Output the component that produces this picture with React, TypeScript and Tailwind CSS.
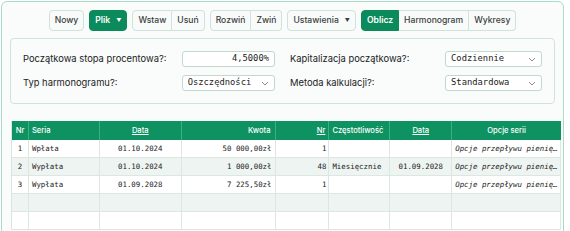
import React from "react";

const sans = { fontFamily: "Inter, 'Noto Sans', sans-serif" };

function Btn({ children, green, first, last, single, caret }: { children: React.ReactNode; green?: boolean; first?: boolean; last?: boolean; single?: boolean; caret?: boolean }) {
  const r = single ? "rounded-[4px] border" : first ? "rounded-l-[4px] border" : last ? "rounded-r-[4px] border border-l-0" : "border border-l-0";
  const c = green
    ? "bg-[#0b8a5b] border-[#0b8a5b] text-white font-semibold"
    : "bg-[#f9fbfa] border-[#cfe3da] text-[#3a3f3d] font-medium";
  return (
    <div className={`h-[21px] flex items-center px-[5px] text-[8.6px] ${r} ${c}`}>
      {children}
      {caret && <span className="ml-[6px] text-[5px] leading-none">▼</span>}
    </div>
  );
}

function Chevron() {
  return (
    <svg width="8" height="5" viewBox="0 0 8 5" className="ml-auto">
      <path d="M1 1 L4 4 L7 1" fill="none" stroke="#7a807d" strokeWidth="0.9" />
    </svg>
  );
}

function Select({ value, w }: { value: string; w: string }) {
  return (
    <div className={`h-[16px] ${w} flex items-center border border-[#bfd9cd] rounded-[3px] bg-white px-[5px] text-[8.8px] text-[#222]`} style={{ fontFamily: "'DejaVu Sans Mono', monospace" }}>
      <span>{value}</span>
      <Chevron />
    </div>
  );
}

const cols = [17, 71, 82, 94, 54, 61, 62, 109];

type Row = { nr: string; seria: string; data: string; kwota: string; n: string; cz: string; d2: string; op: string };
const OP = "Opcje przepływu pienię…";
const rows: (Row | null)[] = [
  { nr: "1", seria: "Wpłata", data: "01.10.2024", kwota: "50 000,00zł", n: "1", cz: "", d2: "", op: OP },
  { nr: "2", seria: "Wypłata", data: "01.10.2024", kwota: "1 000,00zł", n: "48", cz: "Miesięcznie", d2: "01.09.2028", op: OP },
  { nr: "3", seria: "Wypłata", data: "01.09.2028", kwota: "7 225,50zł", n: "1", cz: "", d2: "", op: OP },
  null,
  null,
];

export default function App() {
  const mono = { fontFamily: "'DejaVu Sans Mono', monospace" };
  const al = ["text-center", "text-left pl-[3px]", "text-center", "text-right pr-[3px]", "text-right pr-[2px]", "text-left pl-[3px]", "text-center", "text-left pl-[3px] italic"];
  return (
    <div className="w-[570px] h-[231px] bg-white overflow-hidden" style={sans}>
      <div className="ml-[1px] mt-[1px] w-[563px] h-[240px] border border-[#a9dcc7] rounded-t-[6px] bg-[#f9fcfb] px-[8px] pt-[8px]">
        <div className="flex justify-center gap-[5px]">
          <Btn single>Nowy</Btn>
          <Btn single green caret>Plik</Btn>
          <div className="flex">
            <Btn first>Wstaw</Btn>
            <Btn last>Usuń</Btn>
          </div>
          <div className="flex">
            <Btn first>Rozwiń</Btn>
            <Btn last>Zwiń</Btn>
          </div>
          <Btn single caret>Ustawienia</Btn>
          <div className="flex">
            <Btn first green>Oblicz</Btn>
            <Btn>Harmonogram</Btn>
            <Btn last>Wykresy</Btn>
          </div>
        </div>

        <div className="mt-[7px] border border-[#cfe3da] rounded-[4px] bg-[#f9fcfb] pl-[12px] pr-[12px] pt-[12px] pb-[12px] grid grid-cols-2 gap-x-[15px] gap-y-[8px] text-[9.4px] text-[#222]">
          <div className="flex items-center">
            <span className="w-[160px]">Początkowa stopa procentowa?:</span>
            <div className="h-[16px] w-[94px] flex items-center justify-end border border-[#bfd9cd] rounded-[3px] bg-white px-[5px] text-[8.8px]" style={mono}>4,5000%</div>
          </div>
          <div className="flex items-center">
            <span className="w-[157px]">Kapitalizacja początkowa?:</span>
            <Select value="Codziennie" w="w-[98px]" />
          </div>
          <div className="flex items-center">
            <span className="w-[160px]">Typ harmonogramu?:</span>
            <Select value="Oszczędności" w="w-[94px]" />
          </div>
          <div className="flex items-center">
            <span className="w-[157px]">Metoda kalkulacji?:</span>
            <Select value="Standardowa" w="w-[98px]" />
          </div>
        </div>

        <div className="mt-[17px] ml-[1px] w-[550px] border-l border-[#d8e6df]">
          <div className="flex h-[19px] bg-[#0e9262] text-white text-[7.6px] font-medium">
            {[
              { t: "Nr", a: "justify-center" },
              { t: "Seria", a: "justify-start pl-[3px]" },
              { t: "Data", a: "justify-center", u: true },
              { t: "Kwota", a: "justify-end pr-[4px]" },
              { t: "Nr", a: "justify-end pr-[3px]", u: true },
              { t: "Częstotliwość", a: "justify-start pl-[3px]" },
              { t: "Data", a: "justify-center", u: true },
              { t: "Opcje serii", a: "justify-center" },
            ].map((h, i) => (
              <div key={i} style={{ width: cols[i] }} className={`flex items-center border-r border-[#3fae85] whitespace-nowrap ${h.a} ${i === 7 ? "border-r-0" : ""}`}>
                <span className={h.u ? "underline" : ""}>{h.t}</span>
              </div>
            ))}
          </div>
          {rows.map((r, ri) => {
            const bg = ri % 2 === 1 ? "bg-[#eef4f1]" : "bg-white";
            const cells = r
              ? [r.nr, r.seria, r.data, r.kwota, r.n, r.cz, r.d2, r.op]
              : ["", "", "", "", "", "", "", ""];
            return (
              <div key={ri} className={`flex h-[18px] border-b border-[#dce7e2] text-[7.4px] text-[#222] ${bg}`} style={mono}>
                {cells.map((c, i) => (
                  <div key={i} style={{ width: cols[i] }} className={`h-full leading-[17px] border-r border-[#dce7e2] whitespace-pre ${al[i]}`}>
                    {c}
                  </div>
                ))}
              </div>
            );
          })}
        </div>
      </div>
    </div>
  );
}
